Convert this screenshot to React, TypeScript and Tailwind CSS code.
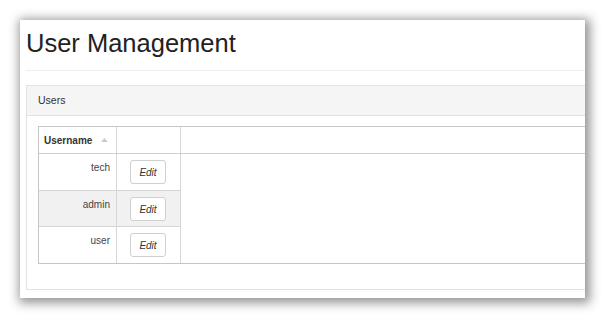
const users = ['tech', 'admin', 'user'];

function EditButton() {
  return (
    <button className="flex h-[24px] w-[36px] items-center justify-center rounded-[3px] border border-[#cfcfcf] bg-white text-[10px] italic text-[#333]">
      Edit
    </button>
  );
}

export default function App() {
  return (
    <div className="h-[318px] w-[605px] bg-white pl-[20px] pt-[20px] font-['Liberation_Sans',Arial,sans-serif] text-[#333]">
      <div className="h-[278px] w-[565px] overflow-hidden bg-white shadow-[2px_2px_10px_3px_rgba(0,0,0,0.42)]">
        <div className="w-[720px] pl-[6px] pt-[10px]">
          <h1 className="text-[25.5px] leading-[26px] text-[#222]">User Management</h1>
          <div className="mt-[14px] border-t border-[#eeeeee]" />

          <section className="mt-[14px] border border-[#e2e2e2]">
            <header className="flex h-[30px] items-center border-b border-[#e2e2e2] bg-[#f5f5f5] pl-[11px] text-[10.5px] text-[#333]">
              Users
            </header>
            <div className="pb-[25px] pl-[11px] pt-[10px]">
              <div className="border border-[#c6c6c6]">
                <div className="flex h-[27px] border-b border-[#cfcfcf]">
                  <div className="flex w-[78px] items-center justify-between border-r border-[#d6d6d6] pl-[5px] pr-[8px]">
                    <span className="text-[10px] font-bold text-[#333]">Username</span>
                    <svg width="7" height="4" viewBox="0 0 7 4">
                      <path d="M0 4 L3.5 0 L7 4 Z" fill="#cccccc" />
                    </svg>
                  </div>
                  <div className="w-[64px] border-r border-[#d6d6d6]" />
                  <div className="flex-1" />
                </div>
                <div className="flex">
                  <div className="w-[142px] border-r border-[#d6d6d6]">
                    {users.map((name, i) => (
                      <div
                        key={name}
                        className={
                          (i === 0 ? 'h-[37px] ' : 'h-[36px] ') +
                          (i < users.length - 1 ? 'border-b border-[#d6d6d6] ' : '') +
                          (i === 1 ? 'bg-[#f1f1f1] ' : '') +
                          'flex'
                        }
                      >
                        <div className="w-[78px] border-r border-[#d6d6d6] pr-[6px] pt-[8px] text-right text-[10px] leading-[12px] text-[#444]">
                          {name}
                        </div>
                        <div className="pl-[13px] pt-[6px]">
                          <EditButton />
                        </div>
                      </div>
                    ))}
                  </div>
                  <div className="flex-1" />
                </div>
              </div>
            </div>
          </section>
        </div>
      </div>
    </div>
  );
}
